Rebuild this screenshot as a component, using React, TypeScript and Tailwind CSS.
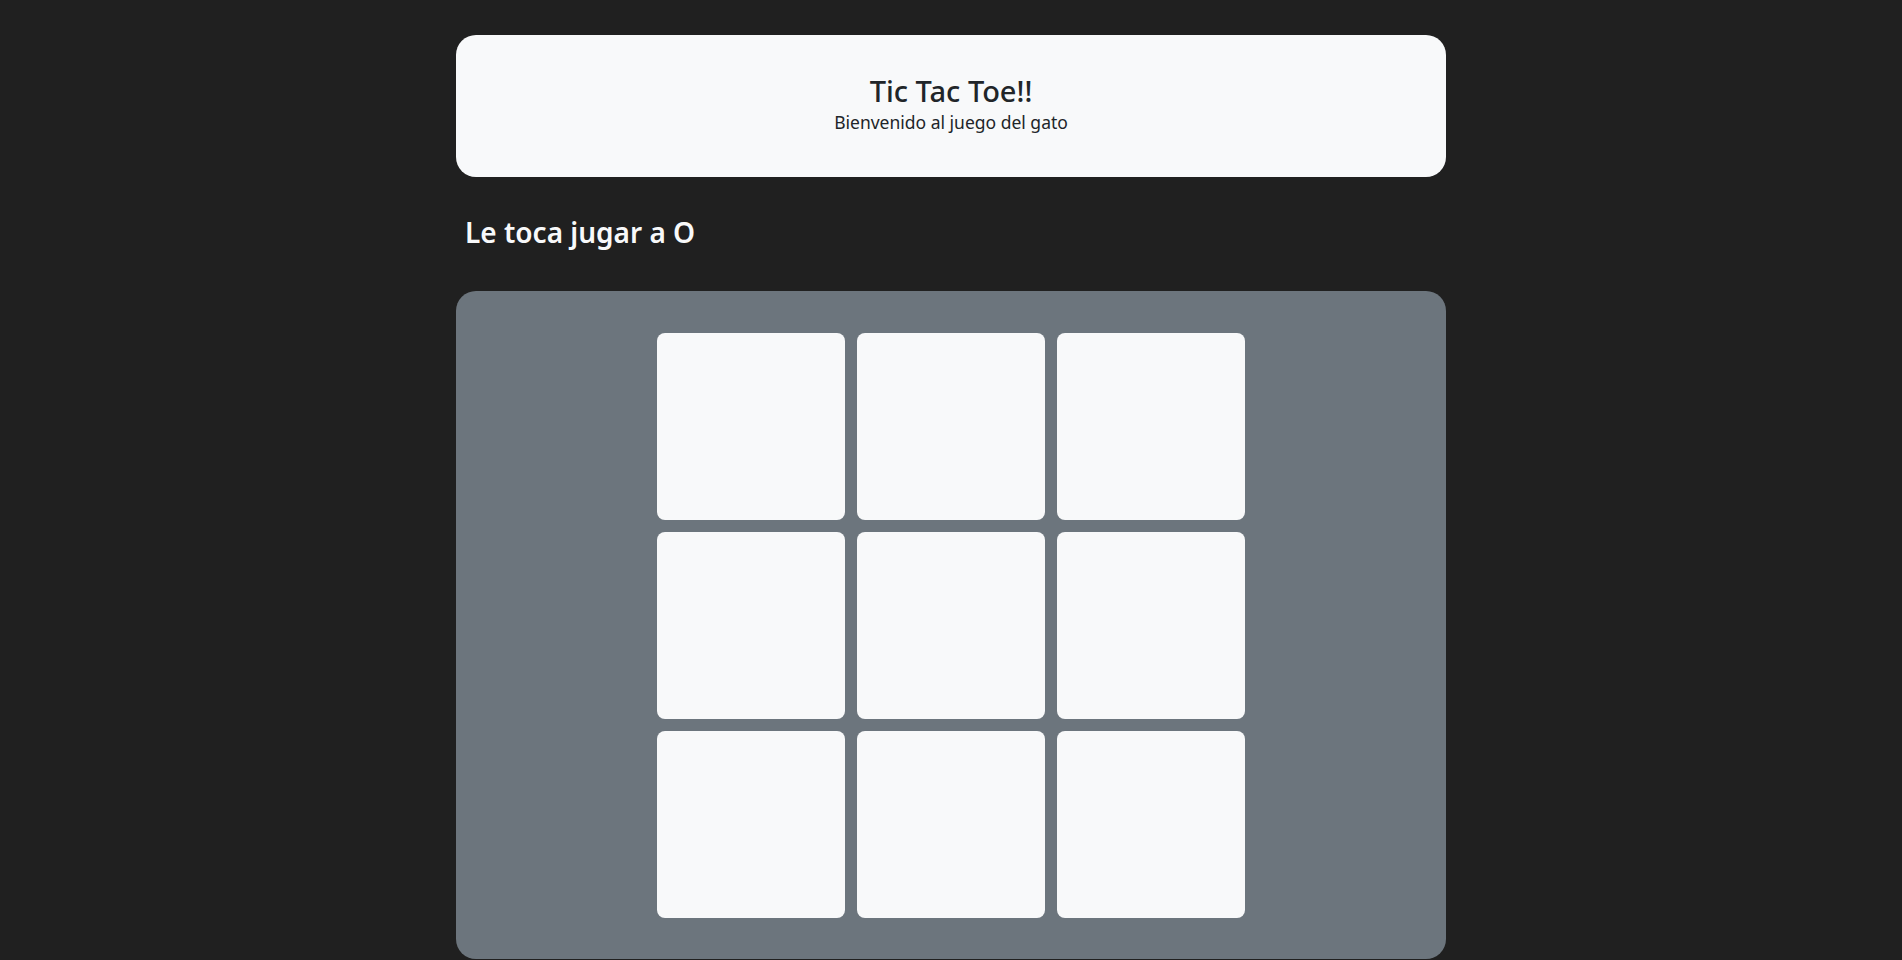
import React, { useState } from 'react';

type Cell = 'X' | 'O' | null;

const font = { fontFamily: '"Noto Sans", "Open Sans", sans-serif' };

export default function App() {
  const [board, setBoard] = useState<Cell[]>(Array(9).fill(null));
  const [turn, setTurn] = useState<'X' | 'O'>('O');

  const play = (i: number) => {
    if (board[i]) return;
    const next = [...board];
    next[i] = turn;
    setBoard(next);
    setTurn(turn === 'O' ? 'X' : 'O');
  };

  return (
    <div className="min-h-screen bg-[#202020] pt-[35px]" style={font}>
      <div className="w-[990px] mx-auto">
        <header className="h-[142px] rounded-[20px] bg-[#f8f9fa] text-[#212529] flex flex-col items-center justify-center pb-1">
          <h2 className="text-[29px] font-medium leading-[36px]">Tic Tac Toe!!</h2>
          <p className="text-[17.5px] leading-[26px]">Bienvenido al juego del gato</p>
        </header>

        <h3 className="mt-[37px] px-[9px] text-[28px] font-semibold leading-9 text-[#f8f9fa]">
          Le toca jugar a {turn}
        </h3>

        <section className="mt-[41px] rounded-[20px] bg-[#6c757d] pt-[42px] pb-[41px]">
          <div className="grid grid-cols-[repeat(3,188px)] auto-rows-[187px] gap-3 justify-center">
            {board.map((c, i) => (
              <button
                key={i}
                type="button"
                onClick={() => play(i)}
                className="border-0 rounded-[8px] bg-[#f8f9fa] text-[#212529] text-7xl font-semibold"
              >
                {c}
              </button>
            ))}
          </div>
        </section>
      </div>
    </div>
  );
}
